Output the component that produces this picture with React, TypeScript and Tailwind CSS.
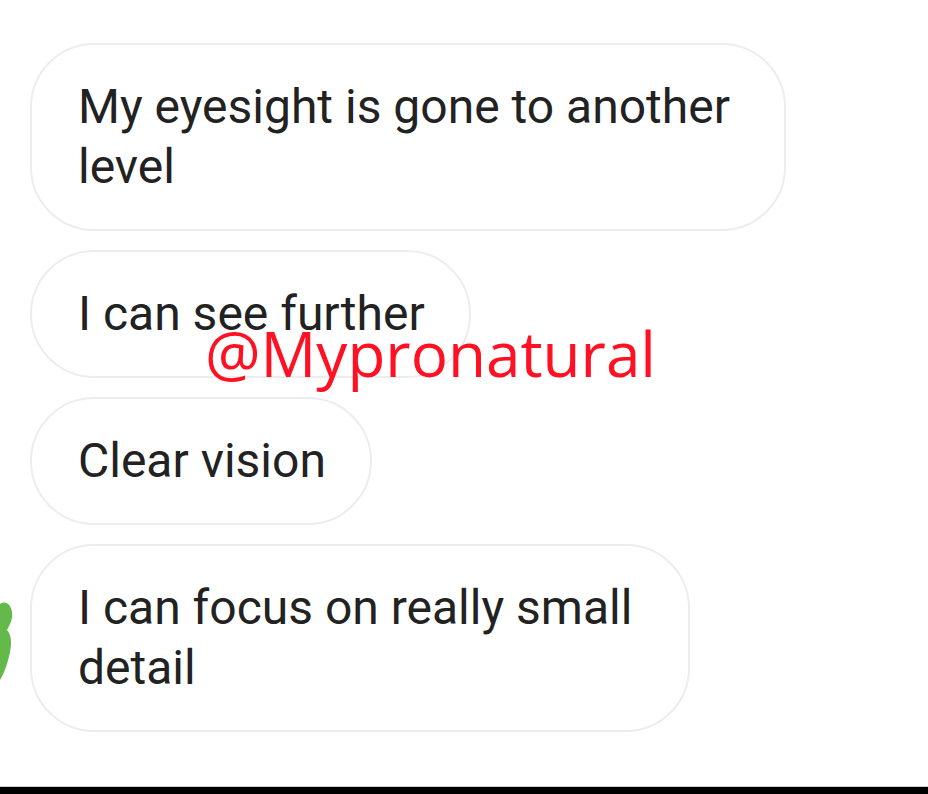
const messages = [
  { text: 'My eyesight is gone to another level', width: 'w-[756px]' },
  { text: 'I can see further', width: 'w-fit' },
  { text: 'Clear vision', width: 'w-fit' },
  { text: 'I can focus on really small detail', width: 'w-[660px]' },
];

export default function App() {
  return (
    <div className="relative w-[928px] h-[794px] bg-white overflow-hidden flex flex-col font-['Roboto',sans-serif]">
      <div className="flex-1 flex flex-col gap-[19px] pt-[43px] pl-[30px]">
        {messages.map((m, i) => (
          <div
            key={i}
            className={`${m.width} border-2 border-[#ededed] rounded-[64px] pl-[46px] pr-[44px] py-[32px] text-[48px] leading-[60px] text-[#222222]`}
          >
            {m.text}
          </div>
        ))}
      </div>

      {/* watermark */}
      <div className="absolute left-[205px] top-[322px] text-[62px] leading-none text-[#ff1023] font-['Open_Sans',sans-serif]">
        @Mypronatural
      </div>

      {/* avatar edge */}
      <svg className="absolute left-0 top-[600px]" width="14" height="84" viewBox="0 0 14 84">
        <path
          d="M0 4 C5 0 11 4 12 12 C13 20 9 26 7 30 C11 34 12 42 10 52 C8 62 4 74 0 80 Z"
          fill="#63b94a"
        />
      </svg>

      <div className="h-px bg-[#cfcfcf]" />
      <div className="h-[7px] bg-black" />
    </div>
  );
}
